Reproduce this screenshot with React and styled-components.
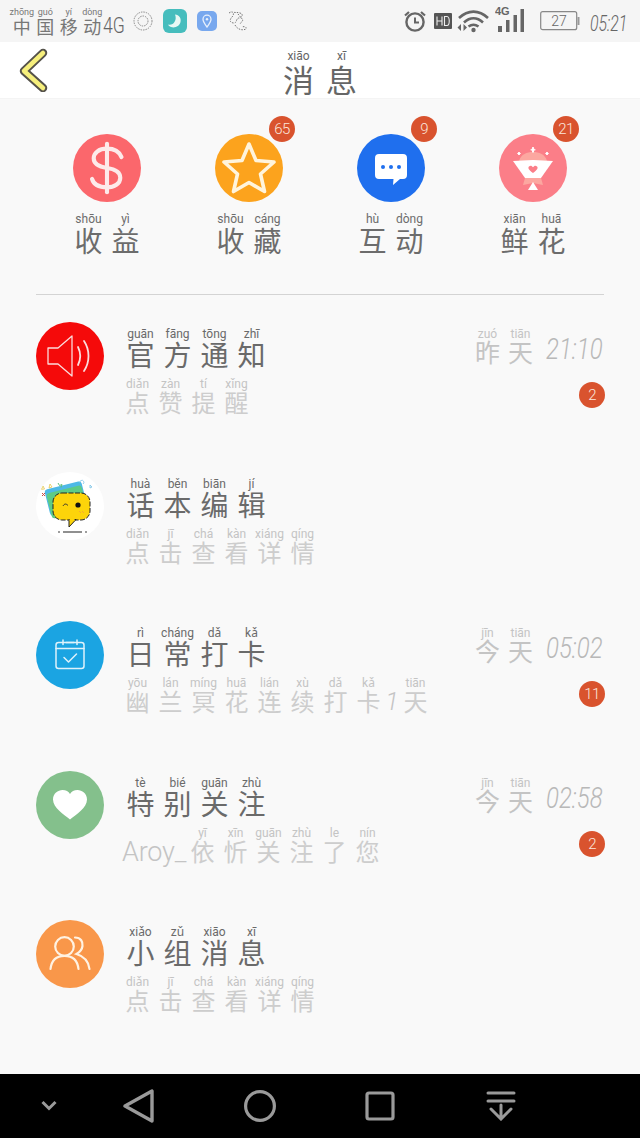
import React from "react";
import styled, { createGlobalStyle } from "styled-components";

const Global = createGlobalStyle`
  html, body { margin: 0; padding: 0; background: #f9f9f9; }
  * { box-sizing: border-box; }
`;
const CJK = `"Noto Sans CJK SC", "Noto Sans", sans-serif`;
const Page = styled.div`
  width: 640px; height: 1138px; display: flex; flex-direction: column;
  background: #f9f9f9; overflow: hidden; font-family: ${CJK};
`;

/* Pinyin */
const Word = styled.span`display: inline-flex; align-items: flex-end;`;
const Cell = styled.span`
  display: inline-flex; flex-direction: column; align-items: center;
  width: ${p => p.$w}px; flex: none;
`;
const Py = styled.span`
  font-family: Roboto, "Noto Sans", sans-serif;
  font-size: ${p => p.$py}px; line-height: ${p => p.$py + 1}px;
  color: ${p => p.$c}; white-space: nowrap;
`;
const Han = styled.span`
  font-family: ${CJK}; font-weight: 400;
  font-size: ${p => p.$s}px; line-height: ${p => p.$lh}px;
  color: ${p => p.$c};
`;
function Pinyin({ items, w, s, lh, py, c, pc }) {
  return (
    <Word>
      {items.map(([h, p], i) => (
        <Cell key={i} $w={w}>
          <Py $py={py} $c={pc || c}>{p}</Py>
          <Han $s={s} $lh={lh} $c={c}>{h}</Han>
        </Cell>
      ))}
    </Word>
  );
}

/* Status bar */
const StatusBar = styled.div`
  height: 42px; flex: none; background: #f5f5f5; display: flex;
  align-items: center; justify-content: space-between; padding: 0 12px 0 10px;
`;
const StatusGroup = styled.div`display: flex; align-items: center;`;
const Carrier = styled.span`
  font-family: Roboto, sans-serif; font-weight: 300; font-size: 22px; color: #666;
  line-height: 22px; margin-top: 10px; margin-left: -1px; width: 22px;
  display: inline-block; white-space: nowrap; transform: scaleX(.8); transform-origin: left center;
`;
const LeftIcons = styled.div`display: flex; align-items: center; gap: 10px; margin-left: 8px;`;
const Clock = styled.span`
  font-family: Roboto, sans-serif; font-style: italic; font-weight: 300;
  font-size: 22px; color: #666; margin-left: 10px; margin-top: 4px; width: 38px;
  display: inline-block; white-space: nowrap; transform: scaleX(.72); transform-origin: left center;
`;
const StatusIcons = styled.div`display: flex; align-items: center;`;

function Alarm() {
  return (
    <svg width="24" height="24" viewBox="0 0 24 24" fill="none" stroke="#666" strokeWidth="2.4">
      <circle cx="12" cy="13" r="8.6" />
      <path d="M12 8.5V13.5H16" strokeWidth="2" />
      <path d="M2 6.5 6 3M22 6.5 18 3" strokeWidth="2.2" />
    </svg>
  );
}
function HD() {
  return (
    <svg width="18" height="16" viewBox="0 0 18 16" style={{ marginLeft: 7 }}>
      <rect width="18" height="16" rx="1" fill="#555" />
      <path d="M3 3.5V12.5M8 3.5V12.5M3 8H8M10.5 3.5V12.5H13C16 12.5 16 3.5 13 3.5Z" stroke="#eee" strokeWidth="1.1" fill="none" />
    </svg>
  );
}
function Wifi() {
  return (
    <svg width="34" height="24" viewBox="0 0 34 24" fill="none" stroke="#666" strokeWidth="2.6" style={{ marginLeft: 4 }}>
      <path d="M3 9C12 0.5 23 0.5 32 9" />
      <path d="M8 13.5C14 8 21 8 27 13.5" />
      <path d="M12.5 17.5C16 15 19 15 22.5 17.5" />
      <circle cx="17.5" cy="21" r="2.2" fill="#666" stroke="none" />
      <path d="M5 15 1.5 18.5 5 22ZM7.5 15 11 18.5 7.5 22Z" fill="#666" stroke="none" />
    </svg>
  );
}
function Signal() {
  return (
    <svg width="30" height="28" viewBox="0 0 30 28" style={{ marginLeft: 5, marginTop: -4 }}>
      <text x="0" y="9.5" fontFamily="Liberation Sans" fontWeight="700" fontSize="11" fill="#666">4G</text>
      <rect x="3" y="21" width="4" height="6" fill="#666" />
      <rect x="11" y="15" width="3.5" height="12" fill="#666" />
      <rect x="18.5" y="10" width="3.5" height="17" fill="#666" />
      <rect x="25.5" y="4" width="3.5" height="23" fill="#666" />
    </svg>
  );
}
function Battery() {
  return (
    <svg width="40" height="20" viewBox="0 0 40 20" style={{ marginLeft: 15 }}>
      <rect x="0.7" y="0.7" width="36" height="18" rx="2" fill="none" stroke="#888" strokeWidth="1.2" />
      <rect x="37.5" y="6" width="2" height="8" fill="#999" />
      <text x="19" y="15" textAnchor="middle" fontFamily="Roboto" fontWeight="300" fontSize="14" fill="#666">27</text>
    </svg>
  );
}
function DotBadge() {
  return (
    <svg width="20" height="20" viewBox="0 0 20 20" fill="none" stroke="#888" strokeWidth="1" strokeDasharray="1.5 1">
      <circle cx="10" cy="10" r="9" />
      <circle cx="10" cy="10" r="5" />
    </svg>
  );
}
function MoonTile() {
  return (
    <svg width="24" height="24" viewBox="0 0 24 24">
      <rect width="24" height="24" rx="6" fill="#46bdbd" />
      <path d="M12 5.5C16 6 18.5 9 17.5 13 16.5 17 12 19.5 8 18 6.5 17.4 5.5 16.5 5 15.5 10 17 14.5 11.5 12 5.5Z" fill="#e8f8f4" />
    </svg>
  );
}
function PinTile() {
  return (
    <svg width="20" height="20" viewBox="0 0 20 20">
      <rect width="20" height="20" rx="5" fill="#78a8ee" />
      <path d="M10 16C7.5 12.5 6 10.5 6 8.2A4 4 0 0 1 14 8.2C14 10.5 12.5 12.5 10 16Z" fill="none" stroke="#e8f0fc" strokeWidth="1.3" />
      <circle cx="10" cy="8.2" r="1.2" fill="#e8f0fc" />
    </svg>
  );
}
function Doodle() {
  return (
    <svg width="20" height="22" viewBox="0 0 20 22" fill="none" stroke="#777" strokeWidth="1" strokeDasharray="1.5 1.2">
      <path d="M2 3C6 0 8 4 5 7 2 10 3 13 7 13 10 13 9 8 12 8 15 8 17 4 13 3 10 2 8 3 6 2" />
      <path d="M8 15C10 19 15 21 19 19 20 17 17 16 15 17" />
      <path d="M11 4 16 10 13 14" />
    </svg>
  );
}

/* Header */
const Header = styled.header`
  height: 57px; flex: none; background: #fff; display: grid;
  grid-template-columns: 1fr auto 1fr; align-items: center; padding-left: 18px;
  border-bottom: 1px solid #f4f4f4;
`;
const Back = styled.button`
  border: 0; padding: 0; background: none; justify-self: start; display: flex;
`;
const TitleWrap = styled.div`margin-left: -18px; margin-top: -5px;`;

/* Shortcuts */
const Main = styled.main`flex: 1; padding: 35px 36px 0;`;
const Shortcuts = styled.section`
  display: grid; grid-template-columns: repeat(4, 1fr);
  height: 161px; border-bottom: 1px solid #d4d4d4;
`;
const Shortcut = styled.div`display: flex; flex-direction: column; align-items: center;`;
const ShortIcon = styled.div`
  position: relative; width: 68px; height: 68px; border-radius: 50%;
  background: ${p => p.$bg}; display: flex; align-items: center; justify-content: center;
  margin-bottom: 11px; color: #fff; flex: none;
`;
const Count = styled.span`
  width: 26px; height: 26px; border-radius: 50%; background: #d9532e; color: #fbe6dc;
  font-family: Roboto, sans-serif; font-weight: 300; font-size: 15px; letter-spacing: -.6px;
  display: flex; align-items: center; justify-content: center; flex: none;
`;
const ShortCount = styled(Count)`position: absolute; top: -18px; right: -12px;`;

/* Rows */
const List = styled.div`padding-top: 27px;`;
const Row = styled.article`height: 149.5px; display: flex; align-items: flex-start;`;
const Avatar = styled.div`
  width: 68px; height: 68px; border-radius: 50%; background: ${p => p.$bg};
  display: flex; align-items: center; justify-content: center; flex: none; overflow: hidden;
`;
const Body = styled.div`
  flex: 1; min-width: 0; margin-left: 18px; padding-top: 6px;
  display: flex; flex-direction: column; gap: 11px;
`;
const Sub = styled.div`display: flex; align-items: flex-end; margin-left: -1px;`;
const SubLatin = styled.span`
  font-family: Roboto, sans-serif; font-weight: 300; font-size: 27px; line-height: 24px;
  color: #c4c4c4; width: 64px; margin-left: 1px; margin-bottom: -2px; letter-spacing: -.2px; white-space: nowrap;
`;
const SubDigit = styled.span`
  font-family: Roboto, sans-serif; font-style: italic; font-weight: 300; font-size: 25px; line-height: 20px;
  color: #c4c4c4; width: 14px; text-align: center;
`;
const Meta = styled.div`
  flex: none; display: flex; flex-direction: column; align-items: flex-end;
  padding-top: 6px; margin-right: -1px; gap: 17px;
`;
const MetaTop = styled.div`display: flex; align-items: flex-start; margin-right: 1px;`;
const Time = styled.span`
  font-family: Roboto, sans-serif; font-style: italic; font-weight: 300;
  font-size: 30px; line-height: 32px; color: #b8b8b8; margin-left: 9px; margin-top: 5px; width: 58px;
  display: inline-block; white-space: nowrap; transform: scaleX(.8); transform-origin: left center;
`;

/* Nav */
const Nav = styled.nav`
  height: 64px; flex: none; background: #000; display: grid;
  grid-template-columns: 98px 82px 160px 80px 162px; align-items: center; justify-items: center;
`;

const Speaker = () => (
  <svg width="46" height="42" viewBox="0 0 46 42" fill="none" stroke="#fbdcdc" strokeWidth="1.3">
    <path d="M1 13H11L25 1V41L11 29H1Z" strokeLinejoin="round" />
    <path d="M31 12C34 18 34 24 31 30" strokeWidth="1.8" strokeLinecap="round" />
    <path d="M37 6C43 15 43 27 37 36" strokeWidth="1.8" strokeLinecap="round" />
  </svg>
);
const Sticker = () => (
  <svg width="68" height="68" viewBox="0 0 68 68">
    <g transform="rotate(-14 30 27)">
      <rect x="11" y="13" width="38" height="27" rx="3" fill="#4eb9e6" />
      <rect x="12" y="17" width="36" height="26" rx="3" fill="#5ecb86" />
    </g>
    <rect x="17" y="21" width="37" height="27" rx="9" fill="#fdd40a" stroke="#222" strokeWidth="1" strokeDasharray="5 1.5" />
    <path d="M33 47.5V55L40 47.5Z" fill="#fdd40a" stroke="#222" strokeWidth="1" />
    <rect x="33.6" y="46.8" width="5" height="2" fill="#fdd40a" />
    <path d="M27 34C28.5 31.5 30 31.5 32 33.5" fill="none" stroke="#333" strokeWidth="1" />
    <circle cx="42" cy="33" r="2.6" fill="#111" />
    <path d="M43 39 45 41M46 39 48 41" stroke="#f3a03c" strokeWidth=".8" />
    <path d="M27 60H46" stroke="#222" strokeWidth="1.2" />
    <circle cx="23" cy="60" r=".8" fill="#222" /><circle cx="50" cy="60" r=".8" fill="#222" />
    <path d="M7 14l1.5 3-3 .3zM14 12l2 3-3 1z" fill="none" stroke="#e4c84e" strokeWidth=".8" />
    <path d="M22 11l1.5 2.5 2.5-1-1 3" fill="none" stroke="#5fbd78" strokeWidth="1" />
    <path d="M44 11a2 2 0 1 1 3 1M54 13l2 2-2 1z" fill="none" stroke="#7cc3e6" strokeWidth=".8" />
    <path d="M6 21l3 3M9 21l-3 3" stroke="#d0463c" strokeWidth="1" />
  </svg>
);
const Calendar = () => (
  <svg width="32" height="32" viewBox="0 0 32 32" fill="none" stroke="#dff2fb" strokeWidth="1.5" strokeLinecap="round" strokeLinejoin="round">
    <rect x="2" y="3.5" width="28" height="26" rx="2.5" />
    <path d="M2 9.5H30M9 1V5.5M16 3.5H12M23 1V5.5M16 3.5H20" />
    <path d="M10 18.5 14.5 23 22.5 15" />
  </svg>
);
const Heart = () => (
  <svg width="34" height="30" viewBox="0 0 34 30">
    <path d="M17 29.5C11 24.5 0 18 0 9.5 0 3.5 5 0 9.5 0 13 0 15.5 1.5 17 4 18.5 1.5 21 0 24.5 0 29 0 34 3.5 34 9.5 34 18 23 24.5 17 29.5Z" fill="#fff" />
  </svg>
);
const People = () => (
  <svg width="42" height="36" viewBox="0 0 42 36" fill="none" stroke="#fff2e2" strokeWidth="2.2" strokeLinecap="round">
    <circle cx="15.5" cy="10.5" r="9.3" />
    <path d="M1.5 33C2.5 24 8 19.8 15.5 19.8 23 19.8 28.5 24 29.5 33" />
    <path d="M26 1.5C32 1.5 34 6 33.5 10 33 14 30 16.5 27.5 18C34 20 39.5 24 40.5 33" />
  </svg>
);

const rows = [
  { bg: "#f50a0a", icon: <Speaker />, title: [["官", "guān"], ["方", "fāng"], ["通", "tōng"], ["知", "zhī"]], sub: [["点", "diǎn"], ["赞", "zàn"], ["提", "tí"], ["醒", "xǐng"]], day: [["昨", "zuó"], ["天", "tiān"]], time: "21:10", n: "2" },
  { bg: "#fff", icon: <Sticker />, title: [["话", "huà"], ["本", "běn"], ["编", "biān"], ["辑", "jí"]], sub: [["点", "diǎn"], ["击", "jī"], ["查", "chá"], ["看", "kàn"], ["详", "xiáng"], ["情", "qíng"]] },
  { bg: "#1ba4e2", icon: <Calendar />, title: [["日", "rì"], ["常", "cháng"], ["打", "dǎ"], ["卡", "kǎ"]], sub: [["幽", "yōu"], ["兰", "lán"], ["冥", "míng"], ["花", "huā"], ["连", "lián"], ["续", "xù"], ["打", "dǎ"], ["卡", "kǎ"]], digit: "1", tail: [["天", "tiān"]], day: [["今", "jīn"], ["天", "tiān"]], time: "05:02", n: "11" },
  { bg: "#84c08c", icon: <Heart />, title: [["特", "tè"], ["别", "bié"], ["关", "guān"], ["注", "zhù"]], latin: "Aroy_", sub: [["依", "yī"], ["忻", "xīn"], ["关", "guān"], ["注", "zhù"], ["了", "le"], ["您", "nín"]], day: [["今", "jīn"], ["天", "tiān"]], time: "02:58", n: "2" },
  { bg: "#f9974a", icon: <People />, title: [["小", "xiǎo"], ["组", "zǔ"], ["消", "xiāo"], ["息", "xī"]], sub: [["点", "diǎn"], ["击", "jī"], ["查", "chá"], ["看", "kàn"], ["详", "xiáng"], ["情", "qíng"]] },
];

const subProps = { w: 33, s: 24, lh: 22, py: 12, c: "#cdcdcd", pc: "#c4c4c4" };

export default function App() {
  return (
    <Page>
      <Global />
      <StatusBar>
        <StatusGroup>
          <Pinyin items={[["中", "zhōng"], ["国", "guó"], ["移", "yí"], ["动", "dòng"]]} w={23.5} s={18} lh={18} py={9} c="#777" />
          <Carrier>4G</Carrier>
          <LeftIcons>
            <DotBadge /><MoonTile /><PinTile /><Doodle />
          </LeftIcons>
        </StatusGroup>
        <StatusGroup>
          <StatusIcons>
            <Alarm /><HD /><Wifi /><Signal /><Battery />
          </StatusIcons>
          <Clock>05:21</Clock>
        </StatusGroup>
      </StatusBar>

      <Header>
        <Back aria-label="back">
          <svg width="30" height="44" viewBox="0 0 30 44" fill="none" strokeLinecap="round" strokeLinejoin="round">
            <path d="M25 5 6 23 25 40" stroke="#55524a" strokeWidth="8.5" />
            <path d="M25 5 6 23 25 40" stroke="#f6ef7c" strokeWidth="4.5" />
          </svg>
        </Back>
        <TitleWrap>
          <Pinyin items={[["消", "xiāo"], ["息", "xī"]]} w={43} s={31} lh={31} py={12} c="#666" />
        </TitleWrap>
        <span />
      </Header>

      <Main>
        <Shortcuts>
          <Shortcut>
            <ShortIcon $bg="#fb676c">
              <svg width="58" height="58" viewBox="0 0 24 24" fill="none" stroke="#fdeaea" strokeWidth="1.7" strokeLinecap="round">
                <path d="M12 2V22" />
                <path d="M18 7.5C17 5 14.5 4 12 4 8.5 4 6.5 5.8 6.5 8 6.5 10.5 8.5 11.5 12 12 15.5 12.5 17.5 13.8 17.5 16 17.5 18.5 15 20 12 20 9 20 6.5 19 5.8 16.5" />
              </svg>
            </ShortIcon>
            <Pinyin items={[["收", "shōu"], ["益", "yì"]]} w={37} s={28} lh={29} py={12} c="#6c6c6c" />
          </Shortcut>
          <Shortcut>
            <ShortIcon $bg="#fca31d">
              <svg width="56" height="54" viewBox="0 0 56 54">
                <path d="M28 3 35 19.5 53 21 39.5 33 43.5 50.5 28 41.5 12.5 50.5 16.5 33 3 21 21 19.5Z" fill="#fca31d" stroke="#fff4dc" strokeWidth="3.6" strokeLinejoin="round" />
              </svg>
              <ShortCount>65</ShortCount>
            </ShortIcon>
            <Pinyin items={[["收", "shōu"], ["藏", "cáng"]]} w={37} s={28} lh={29} py={12} c="#6c6c6c" />
          </Shortcut>
          <Shortcut>
            <ShortIcon $bg="#1f6fee">
              <svg width="34" height="34" viewBox="0 0 34 34" style={{ marginTop: 4 }}>
                <path d="M5 1H29A4 4 0 0 1 33 5V22A4 4 0 0 1 29 26H26L19 32 19.5 26H5A4 4 0 0 1 1 22V5A4 4 0 0 1 5 1Z" fill="#fff" />
                <circle cx="9" cy="14" r="2" fill="#1f6fee" /><circle cx="17" cy="14" r="2" fill="#1f6fee" /><circle cx="25" cy="14" r="2" fill="#1f6fee" />
              </svg>
              <ShortCount>9</ShortCount>
            </ShortIcon>
            <Pinyin items={[["互", "hù"], ["动", "dòng"]]} w={37} s={28} lh={29} py={12} c="#6c6c6c" />
          </Shortcut>
          <Shortcut>
            <ShortIcon $bg="#fb7e88">
              <svg width="44" height="46" viewBox="0 0 44 46" style={{ marginTop: 2 }}>
                <path d="M8 15C10 8 16 6 22 6 28 6 34 8 36 15Z" fill="#fca7a0" />
                <path d="M22 1 23.2 3.8 22 6.5 20.8 3.8ZM19.5 3.8H24.5M8 6 9 7.5 8 9 7 7.5ZM6.5 7.5H9.5M36 6 37 7.5 36 9 35 7.5ZM34.5 7.5H37.5" stroke="#fff" strokeWidth="1" fill="#fff" />
                <path d="M2 15 22 14 42 15 30 32H14Z" fill="#fff" />
                <path d="M22 27C18 24 16.5 22 18 20.5 19.5 19 21 20 22 21.2 23 20 24.5 19 26 20.5 27.5 22 26 24 22 27Z" fill="#fb7e88" />
                <path d="M14 32H30L32 39 22 37 12 39Z" fill="#fca7a0" />
                <path d="M22 36 27 44H17Z" fill="#fff" />
              </svg>
              <ShortCount>21</ShortCount>
            </ShortIcon>
            <Pinyin items={[["鲜", "xiān"], ["花", "huā"]]} w={37} s={28} lh={29} py={12} c="#6c6c6c" />
          </Shortcut>
        </Shortcuts>

        <List>
          {rows.map((r, i) => (
            <Row key={i}>
              <Avatar $bg={r.bg}>{r.icon}</Avatar>
              <Body>
                <Pinyin items={r.title} w={37} s={28} lh={26} py={12} c="#6a6a6a" />
                <Sub>
                  {r.latin && <SubLatin>{r.latin}</SubLatin>}
                  <Pinyin items={r.sub} {...subProps} />
                  {r.digit && <SubDigit>{r.digit}</SubDigit>}
                  {r.tail && <Pinyin items={r.tail} {...subProps} />}
                </Sub>
              </Body>
              {r.time && (
                <Meta>
                  <MetaTop>
                    <Pinyin items={r.day} w={33} s={25} lh={20} py={12} c="#c4c4c4" />
                    <Time>{r.time}</Time>
                  </MetaTop>
                  <Count>{r.n}</Count>
                </Meta>
              )}
            </Row>
          ))}
        </List>
      </Main>

      <Nav>
        <svg width="16" height="12" viewBox="0 0 16 12" fill="none" stroke="#9a9a9a" strokeWidth="3"><path d="M1.5 2 8 8.5 14.5 2" /></svg>
        <svg width="32" height="34" viewBox="0 0 32 34" fill="none" stroke="#9a9a9a" strokeWidth="3.4" strokeLinejoin="round"><path d="M29 2V32L2 17Z" /></svg>
        <svg width="34" height="34" viewBox="0 0 34 34" fill="none" stroke="#9a9a9a" strokeWidth="3.2"><circle cx="17" cy="17" r="14.4" /></svg>
        <svg width="30" height="30" viewBox="0 0 30 30" fill="none" stroke="#9a9a9a" strokeWidth="3.2"><rect x="2" y="2" width="26" height="26" rx="2" /></svg>
        <svg width="30" height="30" viewBox="0 0 30 30" fill="none" stroke="#9a9a9a" strokeWidth="3" strokeLinecap="round"><path d="M2 2H28M2 10H28M15 14V27M5 18 15 28 25 18" /></svg>
      </Nav>
    </Page>
  );
}
